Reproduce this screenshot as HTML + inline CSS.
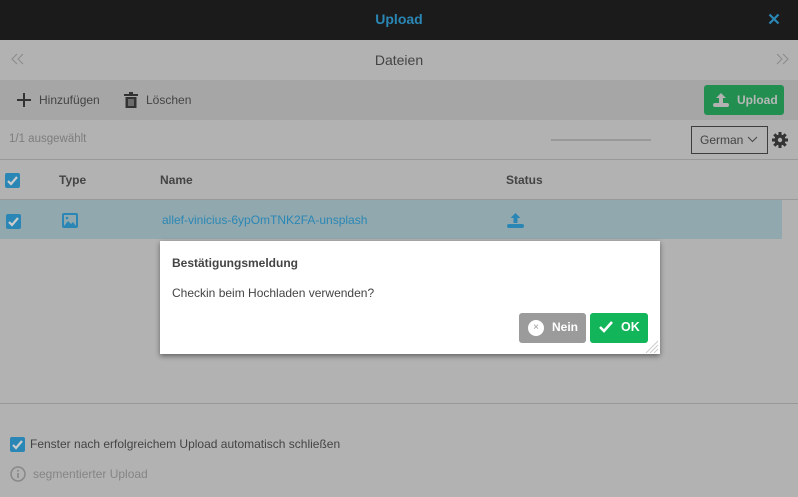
<!DOCTYPE html>
<html><head><meta charset="utf-8"><style>
*{box-sizing:border-box;margin:0;padding:0}
body{width:798px;height:497px;background:#b2b2b2;font-family:"Liberation Sans",sans-serif;font-size:12px;color:#474747;position:relative;overflow:hidden}
.abs{position:absolute}
.hdr{left:0;top:0;width:798px;height:40px;background:#1b1b1b}
.cb{width:15px;height:15px;background:#2a87b5;border-radius:2px}
</style></head><body>
<div class="abs hdr"></div>
<div class="abs" style="left:0;width:798px;top:11px;text-align:center;color:#2a87b5;font-weight:bold;font-size:14px">Upload</div>
<svg class="abs" style="left:768px;top:13px" width="12" height="12" viewBox="0 0 12 12"><path d="M1.5 1.5L10.5 10.5M10.5 1.5L1.5 10.5" stroke="#2a87b5" stroke-width="2.2"/></svg>
<div class="abs" style="left:0;top:40px;width:798px;height:40px;background:#b2b2b2"></div>
<svg class="abs" style="left:11px;top:53px" width="14" height="12"><path d="M6 1L1 6L6 11M12 1L7 6L12 11" stroke="#8a8a8a" fill="none"/></svg>
<svg class="abs" style="left:775px;top:53px" width="14" height="12"><path d="M2 1L7 6L2 11M8 1L13 6L8 11" stroke="#8a8a8a" fill="none"/></svg>
<div class="abs" style="left:0;width:798px;top:52px;text-align:center;font-size:14px;color:#444">Dateien</div>
<div class="abs" style="left:0;top:80px;width:798px;height:40px;background:#a6a6a6"></div>
<svg class="abs" style="left:17px;top:93px" width="14" height="14"><path d="M7 0V14M0 7H14" stroke="#333" stroke-width="2"/></svg>
<div class="abs" style="left:39px;top:93px;font-size:12px;color:#444">Hinzufügen</div>
<svg class="abs" style="left:124px;top:92px" width="14" height="16"><rect x="0" y="2" width="14" height="2" fill="#333"/><rect x="5" y="0" width="4" height="2" fill="#333"/><rect x="1.5" y="5" width="11" height="11" fill="#333"/><path d="M5 7V14M7 7V14M9 7V14" stroke="#a6a6a6" stroke-width="1"/></svg>
<div class="abs" style="left:146px;top:93px;font-size:12px;color:#444">Löschen</div>
<div class="abs" style="left:704px;top:85px;width:80px;height:30px;background:#228f51;border-radius:3px"></div>
<svg class="abs" style="left:712px;top:92px" width="18" height="16"><path d="M9 1L4 6H7V11H11V6H14Z" fill="#b2b2b2"/><rect x="1" y="11" width="16" height="4" rx="2" fill="#b2b2b2"/></svg>
<div class="abs" style="left:737px;top:93px;font-size:12px;color:#b8b8b8;font-weight:bold">Upload</div>
<div class="abs" style="left:9px;top:133px;color:#7d7d7d;font-size:11.5px">1/1 ausgewählt</div>
<div class="abs" style="left:551px;top:139px;width:100px;height:2px;background:#999"></div>
<div class="abs" style="left:691px;top:126px;width:77px;height:28px;border:1px solid #3d3d3d"></div>
<div class="abs" style="left:700px;top:133px;font-size:12px;color:#444">German</div>
<svg class="abs" style="left:747px;top:136px" width="11" height="7"><path d="M1 1L5.5 5.5L10 1" stroke="#444" fill="none"/></svg>
<svg class="abs" style="left:772px;top:132px" width="16" height="16" viewBox="0 0 16 16"><circle cx="8" cy="8" r="5.5" fill="#333"/><path d="M8 0V16M0 8H16M2.3 2.3L13.7 13.7M13.7 2.3L2.3 13.7" stroke="#333" stroke-width="3"/><circle cx="8" cy="8" r="2.2" fill="#b2b2b2"/></svg>
<div class="abs" style="left:0;top:159px;width:798px;height:1px;background:#999"></div>
<div class="abs cb" style="left:5px;top:173px"></div>
<svg class="abs" style="left:5px;top:173px" width="15" height="15"><path d="M3 8L6 11L12 4" stroke="#ccc" stroke-width="2.2" fill="none"/></svg>
<div class="abs" style="left:59px;top:173px;font-weight:bold;font-size:12px;color:#444">Type</div>
<div class="abs" style="left:160px;top:173px;font-weight:bold;font-size:12px;color:#444">Name</div>
<div class="abs" style="left:506px;top:173px;font-weight:bold;font-size:12px;color:#444">Status</div>
<div class="abs" style="left:0;top:199px;width:798px;height:1px;background:#999"></div>
<div class="abs" style="left:0;top:200px;width:782px;height:39px;background:#91a8ae"></div>
<div class="abs cb" style="left:6px;top:214px"></div>
<svg class="abs" style="left:6px;top:214px" width="15" height="15"><path d="M3 8L6 11L12 4" stroke="#ccc" stroke-width="2.2" fill="none"/></svg>
<svg class="abs" style="left:62px;top:213px" width="16" height="15"><rect x="0" y="0" width="16" height="15" rx="2" fill="#2a87b5"/><rect x="2" y="2" width="12" height="11" fill="#91a8ae"/><path d="M2 13L6 8L9 11L11 9L14 13Z" fill="#2a87b5"/><circle cx="5" cy="5" r="1.3" fill="#2a87b5"/></svg>
<div class="abs" style="left:162px;top:213px;color:#2a87b5;font-size:12px">allef-vinicius-6ypOmTNK2FA-unsplash</div>
<svg class="abs" style="left:507px;top:212px" width="17" height="17"><path d="M8.5 1L3.5 6H6.5V11H10.5V6H13.5Z" fill="#2a87b5"/><rect x="0" y="12" width="17" height="4" rx="2" fill="#2a87b5"/></svg>
<div class="abs" style="left:160px;top:241px;width:500px;height:113px;background:#fff;box-shadow:0 2px 5px rgba(0,0,0,.45)"></div>
<div class="abs" style="left:172px;top:256px;font-weight:bold;color:#444;font-size:12px">Bestätigungsmeldung</div>
<div class="abs" style="left:172px;top:286px;color:#444;font-size:12px">Checkin beim Hochladen verwenden?</div>
<div class="abs" style="left:519px;top:313px;width:67px;height:30px;background:#9b9b9b;border-radius:3px"></div>
<div class="abs" style="left:528px;top:320px;width:16px;height:16px;background:#fff;border-radius:50%;color:#999;font-size:10px;text-align:center;line-height:16px">×</div>
<div class="abs" style="left:552px;top:320px;color:#fff;font-weight:bold;font-size:12px">Nein</div>
<div class="abs" style="left:590px;top:313px;width:58px;height:30px;background:#12b55a;border-radius:3px"></div>
<svg class="abs" style="left:598px;top:320px" width="16" height="14"><path d="M2 7L6 11L14 2" stroke="#fff" stroke-width="2.6" fill="none"/></svg>
<div class="abs" style="left:621px;top:320px;color:#fff;font-weight:bold;font-size:12.5px">OK</div>
<svg class="abs" style="left:645px;top:340px" width="14" height="13"><path d="M13 1L1 13M13 5L5 13M13 9L9 13" stroke="#ccc"/></svg>
<div class="abs" style="left:0;top:403px;width:798px;height:1px;background:#999"></div>
<div class="abs cb" style="left:10px;top:437px"></div>
<svg class="abs" style="left:10px;top:437px" width="15" height="15"><path d="M3 8L6 11L12 4" stroke="#ccc" stroke-width="2.2" fill="none"/></svg>
<div class="abs" style="left:30px;top:437px;font-size:12px;color:#444">Fenster nach erfolgreichem Upload automatisch schließen</div>
<svg class="abs" style="left:10px;top:466px" width="16" height="16"><circle cx="8" cy="8" r="7" stroke="#888" stroke-width="1.5" fill="none"/><rect x="7.2" y="7" width="1.6" height="5" fill="#888"/><circle cx="8" cy="4.7" r="1" fill="#888"/></svg>
<div class="abs" style="left:33px;top:467px;font-size:12px;color:#858585">segmentierter Upload</div>
</body></html>
